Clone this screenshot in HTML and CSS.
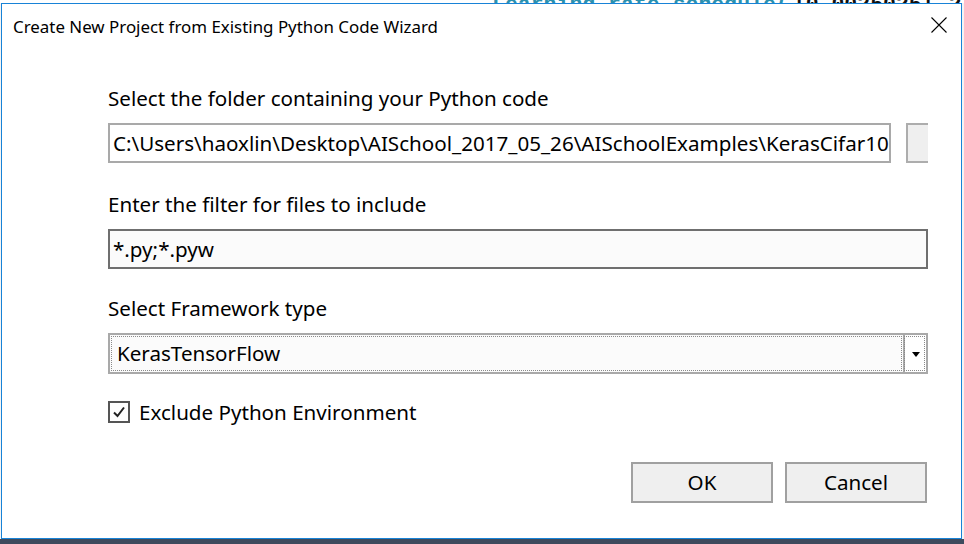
FILE: index.html
```html
<!DOCTYPE html>
<html>
<head>
<meta charset="utf-8">
<link rel="stylesheet" href="styles.css">
</head>
<body>
<div class="screen">
  <div class="backdrop">
    <span class="code-a">Learning_rate_schedule(</span><span class="code-b">|0.0025025|</span><span class="code-c">2</span>
  </div>
  <div class="dialog">
    <div class="titlebar">
      <span class="title">Create New Project from Existing Python Code Wizard</span>
      <svg class="close" width="16" height="16" viewBox="0 0 16 16"><path d="M0.5 0.5 L15.5 15.5 M15.5 0.5 L0.5 15.5" stroke="#000" stroke-width="1.1" fill="none"/></svg>
    </div>
    <div class="content">
      <div class="label l1">Select the folder containing your Python code</div>
      <div class="row">
        <div class="input path">C:\Users\haoxlin\Desktop\AISchool_2017_05_26\AISchoolExamples\KerasCifar10</div>
        <div class="browse"></div>
      </div>
      <div class="label l2">Enter the filter for files to include</div>
      <div class="input filter">*.py;*.pyw</div>
      <div class="label l3">Select Framework type</div>
      <div class="combo">
        <div class="combo-text"><span>KerasTensorFlow</span></div>
        <div class="combo-btn"><svg width="8" height="5" viewBox="0 0 8 5"><path d="M0 0 H8 L4 5 Z" fill="#000"/></svg></div>
      </div>
      <div class="check-row">
        <div class="checkbox"><svg width="18" height="18" viewBox="0 0 18 18"><path d="M4 9.5 L7.5 13 L14 4.5" stroke="#222" stroke-width="2" fill="none"/></svg></div>
        <span class="check-label">Exclude Python Environment</span>
      </div>
      <div class="buttons">
        <div class="btn">OK</div>
        <div class="btn">Cancel</div>
      </div>
    </div>
  </div>
</div>
</body>
</html>
```
FILE: styles.css
```css
html, body {
  margin: 0;
  padding: 0;
}
body {
  width: 964px;
  height: 544px;
  overflow: hidden;
  background: #3e4a5d;
  font-family: "Noto Sans", "Open Sans", sans-serif;
}
.screen {
  width: 964px;
  height: 544px;
  background: linear-gradient(#f4f4f4 0, #f4f4f4 539px, #3e4a5d 539px);
}
.backdrop {
  height: 3px;
  overflow: hidden;
  background: #fff;
  white-space: nowrap;
  font-family: "Liberation Mono", monospace;
  font-weight: bold;
  font-size: 21.5px;
  line-height: 10px;
  padding-left: 492px;
}
.backdrop span {
  display: inline-block;
  margin-top: -15px;
}
.code-a { color: #2b91af; }
.code-b { color: #111; margin-left: 4px; }
.code-c { color: #111; margin-left: 14px; }
.dialog {
  margin-left: 1px;
  width: 961px;
  height: 536px;
  box-sizing: border-box;
  border: 1px solid #1883d7;
  background: #fff;
  overflow: hidden;
}
.titlebar {
  height: 46px;
  display: flex;
  align-items: flex-start;
  padding-left: 11px;
  padding-right: 14px;
}
.title {
  font-size: 16.9px;
  line-height: 20px;
  margin-top: 13px;
  color: #000;
  flex: 1;
  white-space: nowrap;
}
.close {
  margin-top: 13px;
}
.content {
  margin-left: 106px;
  width: 820px;
  overflow: hidden;
  font-size: 20.6px;
  color: #000;
}
.label {
  line-height: 28px;
  height: 28px;
  white-space: nowrap;
}
.l1 { margin-top: 34px; margin-bottom: 11px; }
.l2 { margin-top: 27px; margin-bottom: 11px; }
.l3 { margin-top: 25px; margin-bottom: 11px; }
.row {
  display: flex;
  gap: 15px;
}
.input {
  box-sizing: border-box;
  height: 40px;
  border: 2px solid #a9a9a9;
  background: #fff;
  line-height: 36px;
  padding-left: 3px;
  white-space: nowrap;
  overflow: hidden;
}
.path { width: 783px; flex: none; }
.browse {
  flex: none;
  width: 60px;
  height: 40px;
  box-sizing: border-box;
  border: 2px solid #adadad;
  background: #efefef;
}
.filter {
  width: 820px;
  border-color: #6f6f6f;
  background: #fbfbfb;
}
.combo {
  width: 820px;
  height: 41px;
  box-sizing: border-box;
  border: 2px solid #a9a9a9;
  background: #fbfbfb;
  display: flex;
}
.combo-text {
  flex: 1;
  padding: 1px;
  display: flex;
}
.combo-text span {
  flex: 1;
  border: 1px dotted #8a8a8a;
  line-height: 33px;
  padding-left: 5px;
}
.combo-btn {
  width: 23px;
  border-left: 2px solid #a9a9a9;
  background: #fff;
  display: flex;
  align-items: center;
  justify-content: center;
  box-sizing: border-box;
  outline: 1px dotted #8a8a8a;
  outline-offset: -2px;
}
.combo-btn svg { margin-top: 1px; margin-left: 1px; }
.check-row {
  margin-top: 27px;
  display: flex;
  align-items: center;
  height: 22px;
}
.checkbox {
  width: 22px;
  height: 22px;
  box-sizing: border-box;
  border: 2px solid #555;
  background: #fff;
  display: flex;
  align-items: center;
  justify-content: center;
}
.check-label {
  margin-left: 9px;
  line-height: 24px;
  white-space: nowrap;
}
.buttons {
  margin-top: 39px;
  display: flex;
  justify-content: flex-end;
  gap: 12px;
  padding-right: 1px;
}
.btn {
  width: 142px;
  height: 41px;
  box-sizing: border-box;
  border: 2px solid #a0a0a0;
  background: #efefef;
  text-align: center;
  line-height: 37px;
}
```
